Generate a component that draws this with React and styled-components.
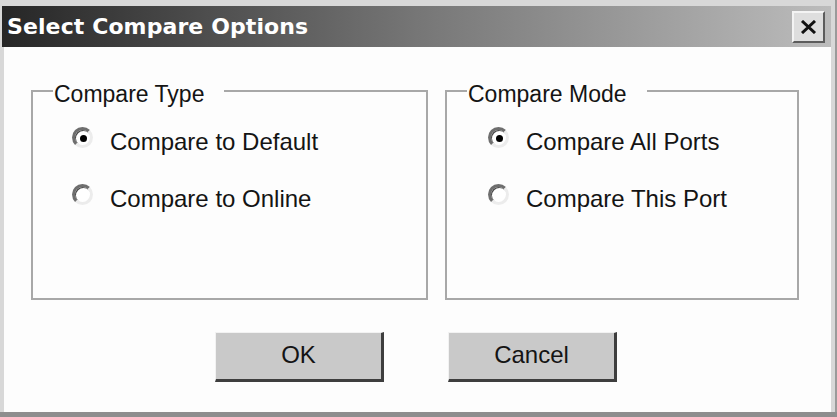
import React from 'react';
import styled, { createGlobalStyle } from 'styled-components';

const GlobalStyle = createGlobalStyle`
  html, body {
    margin: 0;
    padding: 0;
    background: #d6d6d6;
  }
`;

const Window = styled.div`
  box-sizing: border-box;
  width: 837px;
  height: 417px;
  display: flex;
  flex-direction: column;
  padding: 6px 6px 0 2px;
  background: #d8d8d8;
  border-bottom: 5px solid #8e8e8e;
  box-shadow: inset -2px 0 0 #9a9a9a;
  font-family: "Liberation Sans", Arial, sans-serif;
`;

const TitleBar = styled.div`
  height: 41px;
  flex: none;
  display: flex;
  align-items: center;
  justify-content: space-between;
  padding: 0 6px 0 5px;
  background: linear-gradient(to right, #262626 0%, #767676 50%, #bcbcbc 100%);
`;

const Title = styled.span`
  font-family: "DejaVu Sans", Verdana, sans-serif;
  font-weight: bold;
  font-size: 22px;
  color: #fff;
  letter-spacing: 0.1px;
`;

const CloseButton = styled.button`
  box-sizing: border-box;
  width: 33px;
  height: 32px;
  padding: 0;
  display: flex;
  align-items: center;
  justify-content: center;
  background: #dedede;
  border: 2px solid;
  border-color: #f4f4f4 #5c5c5c #5c5c5c #f4f4f4;
  cursor: pointer;
`;

const Body = styled.div`
  flex: 1;
  margin-left: 2px;
  background: #fdfdfd;
  padding-top: 29px;
  display: flex;
  flex-direction: column;
`;

const Groups = styled.div`
  display: grid;
  grid-template-columns: 397px 354px;
  column-gap: 17px;
  padding-left: 27px;
`;

const GroupBox = styled.fieldset`
  box-sizing: border-box;
  height: 224px;
  margin: 0;
  padding: 0 0 0 20px;
  border: 2px solid #a8a8a8;
`;

const Legend = styled.legend`
  padding: 7px 20px 0 1px;
  font-size: 23px;
  line-height: 23px;
  color: #141414;
`;

const Options = styled.div`
  display: flex;
  flex-direction: column;
  gap: 23px;
  margin-top: 19px;
  padding-left: ${(p) => p.$indent}px;
`;

const Option = styled.label`
  display: flex;
  align-items: center;
  height: 34px;
  gap: 17px;
  font-size: 24px;
  line-height: 24px;
  color: #141414;
  cursor: pointer;
`;

const Radio = styled.span`
  box-sizing: border-box;
  position: relative;
  width: 21px;
  height: 21px;
  margin-bottom: 9px;
  flex: none;
  border-radius: 50%;
  background: #fff;
  border: 3px solid;
  border-color: #6e6e6e #ececec #ececec #6e6e6e;
  box-shadow: inset 1px 1px 0 #4a4a4a;

  &::after {
    content: "";
    display: ${(p) => (p.$checked ? 'block' : 'none')};
    position: absolute;
    left: 50%;
    top: 50%;
    width: 7px;
    height: 7px;
    margin: -3px 0 0 -3px;
    border-radius: 50%;
    background: #000;
  }
`;

const Buttons = styled.div`
  display: flex;
  justify-content: center;
  gap: 64px;
  margin-top: 32px;
  padding-right: 3px;
`;

const PushButton = styled.button`
  box-sizing: border-box;
  width: 169px;
  height: 50px;
  background: #c9c9c9;
  border-style: solid;
  border-width: 1px 3px 3px 1px;
  border-color: #f2f2f2 #3e3e3e #3e3e3e #f2f2f2;
  font-family: "Liberation Sans", Arial, sans-serif;
  font-size: 24px;
  color: #141414;
  padding: 0 0 2px;
  cursor: pointer;
`;

const groups = [
  {
    title: 'Compare Type',
    indent: 19,
    options: ['Compare to Default', 'Compare to Online'],
  },
  {
    title: 'Compare Mode',
    indent: 21,
    options: ['Compare All Ports', 'Compare This Port'],
  },
];

export default function App() {
  return (
    <>
      <GlobalStyle />
      <Window>
        <TitleBar>
          <Title>Select Compare Options</Title>
          <CloseButton aria-label="Close">
            <svg width="17" height="14" viewBox="0 0 17 14">
              <path d="M2 1 L15 13 M15 1 L2 13" stroke="#111" strokeWidth="3" />
            </svg>
          </CloseButton>
        </TitleBar>
        <Body>
          <Groups>
            {groups.map((g) => (
              <GroupBox key={g.title}>
                <Legend>{g.title}</Legend>
                <Options $indent={g.indent}>
                  {g.options.map((o, i) => (
                    <Option key={o}>
                      <Radio $checked={i === 0} />
                      {o}
                    </Option>
                  ))}
                </Options>
              </GroupBox>
            ))}
          </Groups>
          <Buttons>
            <PushButton>OK</PushButton>
            <PushButton>Cancel</PushButton>
          </Buttons>
        </Body>
      </Window>
    </>
  );
}
